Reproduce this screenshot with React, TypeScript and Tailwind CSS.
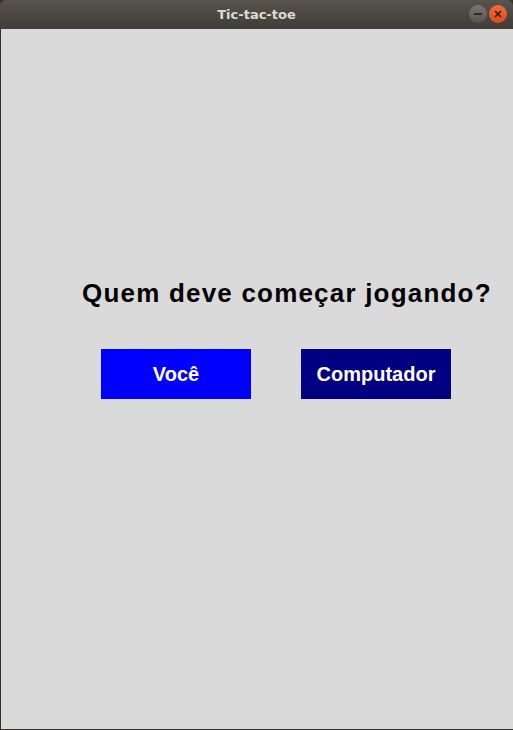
export default function App() {
  return (
    <div className="flex h-[730px] w-[513px] flex-col overflow-hidden bg-[#3d2f27]">
      {/* window title bar */}
      <div className="relative flex h-[29px] flex-none items-center justify-center rounded-t-[6px] bg-gradient-to-b from-[#57534d] to-[#3f3d38]">
        <span className="font-['DejaVu_Sans',sans-serif] text-[13px] font-bold text-[#dfdbd2]">
          Tic-tac-toe
        </span>
        <div className="absolute right-[6px] top-[5px] flex gap-[2px]">
          <div className="flex h-[18px] w-[18px] items-center justify-center rounded-full bg-gradient-to-b from-[#7a7873] to-[#55534e]">
            <div className="h-[1.5px] w-[8px] bg-[#2c2b28]" />
          </div>
          <div className="flex h-[18px] w-[18px] items-center justify-center rounded-full bg-gradient-to-b from-[#f26b3a] to-[#df4a16]">
            <svg width="8" height="8" viewBox="0 0 8 8">
              <path d="M1 1L7 7M7 1L1 7" stroke="#3a1a0c" strokeWidth="1.6" />
            </svg>
          </div>
        </div>
      </div>

      {/* window content */}
      <div className="ml-[1px] mb-[1px] flex flex-1 flex-col bg-[#dadada] font-['Liberation_Sans',Arial,sans-serif]">
        <h1 className="ml-[81px] mt-[249px] text-[26px] font-bold leading-[30px] tracking-[1.2px] text-black">
          Quem deve começar jogando?
        </h1>
        <div className="ml-[100px] mt-[41px] flex gap-[50px]">
          <button className="h-[50px] w-[150px] bg-[#0000ff] text-[20px] font-bold text-white">
            Você
          </button>
          <button className="h-[50px] w-[150px] bg-[#000080] text-[20px] font-bold text-white">
            Computador
          </button>
        </div>
      </div>
    </div>
  );
}
